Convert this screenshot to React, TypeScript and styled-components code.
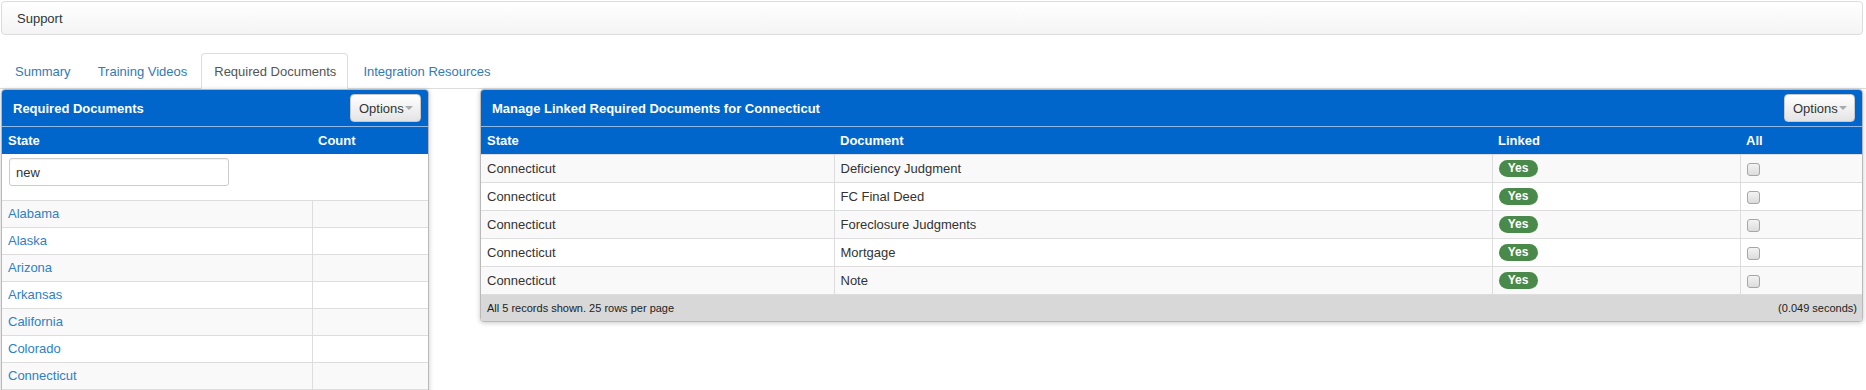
import * as React from 'react';
import styled, { createGlobalStyle } from 'styled-components';

const GlobalStyle = createGlobalStyle`
  html, body {
    margin: 0;
    padding: 0;
    background: #fff;
    font-family: "Liberation Sans", Arial, sans-serif;
    font-size: 13px;
    color: #333;
  }
  * { box-sizing: border-box; }
`;

const Page = styled.div`
  padding: 1px 3px 0 1px;
`;

const TopBar = styled.div`
  height: 34px;
  display: flex;
  align-items: center;
  padding-left: 15px;
  border: 1px solid #dcdcdc;
  border-radius: 4px;
  background: linear-gradient(to bottom, #ffffff 0%, #f4f4f4 100%);
  color: #333;
`;

const Tabs = styled.ul`
  list-style: none;
  margin: 18px -3px 0 -1px;
  padding: 0 0 0 2px;
  display: flex;
  border-bottom: 1px solid #ddd;
  height: 36px;
`;

interface TabProps {
  active?: boolean;
}

const Tab = styled.li<TabProps>`
  margin-right: 2px;
  margin-bottom: -1px;
  padding: 0 11px 0 12px;
  height: 36px;
  display: flex;
  align-items: center;
  border: 1px solid ${(p) => (p.active ? '#ddd' : 'transparent')};
  border-bottom-color: ${(p) => (p.active ? '#fff' : 'transparent')};
  border-radius: 4px 4px 0 0;
  background: ${(p) => (p.active ? '#fff' : 'transparent')};
  color: ${(p) => (p.active ? '#555' : '#337ab7')};
  cursor: pointer;
`;

const Columns = styled.div`
  display: flex;
  align-items: flex-start;
  gap: 51px;
`;

interface PanelProps {
  width?: number;
}

const Panel = styled.div<PanelProps>`
  flex: ${(p) => (p.width ? `0 0 ${p.width}px` : '1 1 auto')};
  border: 1px solid #b9b9b9;
  border-radius: 4px;
  overflow: hidden;
  background: #fff;
  box-shadow: 0 1px 5px rgba(0, 0, 0, 0.22);
`;

const PanelHeader = styled.div`
  height: 37px;
  display: flex;
  align-items: center;
  justify-content: space-between;
  padding: 0 7px 0 11px;
  background: #0066cc;
  border-bottom: 1px solid #8fb8e6;
  color: #fff;
  font-weight: bold;
`;

const OptionsButton = styled.button`
  height: 28px;
  width: 71px;
  padding: 0 0 0 8px;
  display: flex;
  align-items: center;
  border: 1px solid #c8c8c8;
  border-radius: 4px;
  background: linear-gradient(to bottom, #ffffff 0%, #e4e4e4 100%);
  font-family: inherit;
  font-size: 13px;
  color: #333;
  cursor: pointer;
`;

const Caret = styled.span`
  width: 0;
  height: 0;
  margin-left: 1px;
  border-left: 4px solid transparent;
  border-right: 4px solid transparent;
  border-top: 4px solid #aaa;
`;

const Table = styled.table`
  width: 100%;
  border-collapse: collapse;
  table-layout: fixed;
`;

const HeadCell = styled.th`
  height: 27px;
  padding: 0 6px;
  text-align: left;
  background: #0066cc;
  color: #fff;
  font-weight: bold;
  font-size: 13px;
`;

interface RowProps {
  striped?: boolean;
  tall?: boolean;
}

const Row = styled.tr<RowProps>`
  height: ${(p) => (p.tall ? 28 : 27)}px;
  background: ${(p) => (p.striped ? '#f9f9f9' : '#fff')};
`;

const Cell = styled.td`
  padding: 0 6px;
  border-top: 1px solid #ddd;
  border-left: 1px solid #ddd;
  white-space: nowrap;
  overflow: hidden;
  &:first-child {
    border-left: none;
  }
`;

const FilterCell = styled.td`
  height: 46px;
  padding: 4px 7px 0;
  vertical-align: top;
`;

const FilterInput = styled.input`
  width: 220px;
  height: 28px;
  padding: 0 6px;
  border: 1px solid #ccc;
  border-radius: 3px;
  font-family: inherit;
  font-size: 13px;
  color: #333;
  box-shadow: inset 0 1px 1px rgba(0, 0, 0, 0.05);
`;

const StateLink = styled.a`
  color: #2f80c6;
  text-decoration: none;
  cursor: pointer;
`;

const Badge = styled.span`
  display: inline-flex;
  align-items: center;
  justify-content: center;
  width: 39px;
  height: 17px;
  border-radius: 9px;
  background: #498a4b;
  color: #fff;
  font-weight: bold;
  font-size: 12px;
  vertical-align: middle;
`;

const CheckBox = styled.span`
  display: inline-block;
  width: 13px;
  height: 13px;
  border: 1px solid #a6a6a6;
  border-radius: 3px;
  background: linear-gradient(to bottom, #f3f3f3, #dcdcdc);
  vertical-align: middle;
`;

const Footer = styled.div`
  height: 27px;
  display: flex;
  align-items: center;
  justify-content: space-between;
  padding: 0 5px 0 6px;
  background: #d8d8d8;
  border-top: 1px solid #ddd;
  font-size: 11px;
  color: #222;
`;

const states = [
  'Alabama',
  'Alaska',
  'Arizona',
  'Arkansas',
  'California',
  'Colorado',
  'Connecticut',
];

const documents = [
  'Deficiency Judgment',
  'FC Final Deed',
  'Foreclosure Judgments',
  'Mortgage',
  'Note',
];

export default function App() {
  return (
    <Page>
      <GlobalStyle />
      <TopBar>Support</TopBar>
      <Tabs>
        <Tab>Summary</Tab>
        <Tab>Training Videos</Tab>
        <Tab active>Required Documents</Tab>
        <Tab>Integration Resources</Tab>
      </Tabs>
      <Columns>
        <Panel width={428}>
          <PanelHeader>
            <span>Required Documents</span>
            <OptionsButton>
              Options
              <Caret />
            </OptionsButton>
          </PanelHeader>
          <Table>
            <colgroup>
              <col style={{ width: 310 }} />
              <col />
            </colgroup>
            <thead>
              <tr>
                <HeadCell>State</HeadCell>
                <HeadCell>Count</HeadCell>
              </tr>
            </thead>
            <tbody>
              <tr>
                <FilterCell colSpan={2}>
                  <FilterInput defaultValue="new" />
                </FilterCell>
              </tr>
              {states.map((s, i) => (
                <Row key={s} striped={i % 2 === 0}>
                  <Cell>
                    <StateLink>{s}</StateLink>
                  </Cell>
                  <Cell />
                </Row>
              ))}
              <Row>
                <Cell />
                <Cell />
              </Row>
            </tbody>
          </Table>
        </Panel>
        <Panel>
          <PanelHeader>
            <span>Manage Linked Required Documents for Connecticut</span>
            <OptionsButton>
              Options
              <Caret />
            </OptionsButton>
          </PanelHeader>
          <Table>
            <colgroup>
              <col style={{ width: 353 }} />
              <col style={{ width: 658 }} />
              <col style={{ width: 248 }} />
              <col />
            </colgroup>
            <thead>
              <tr>
                <HeadCell>State</HeadCell>
                <HeadCell>Document</HeadCell>
                <HeadCell>Linked</HeadCell>
                <HeadCell>All</HeadCell>
              </tr>
            </thead>
            <tbody>
              {documents.map((d, i) => (
                <Row key={d} tall striped={i % 2 === 0}>
                  <Cell>Connecticut</Cell>
                  <Cell>{d}</Cell>
                  <Cell>
                    <Badge>Yes</Badge>
                  </Cell>
                  <Cell>
                    <CheckBox role="checkbox" aria-checked="false" />
                  </Cell>
                </Row>
              ))}
            </tbody>
          </Table>
          <Footer>
            <span>All 5 records shown. 25 rows per page</span>
            <span>(0.049 seconds)</span>
          </Footer>
        </Panel>
      </Columns>
    </Page>
  );
}
